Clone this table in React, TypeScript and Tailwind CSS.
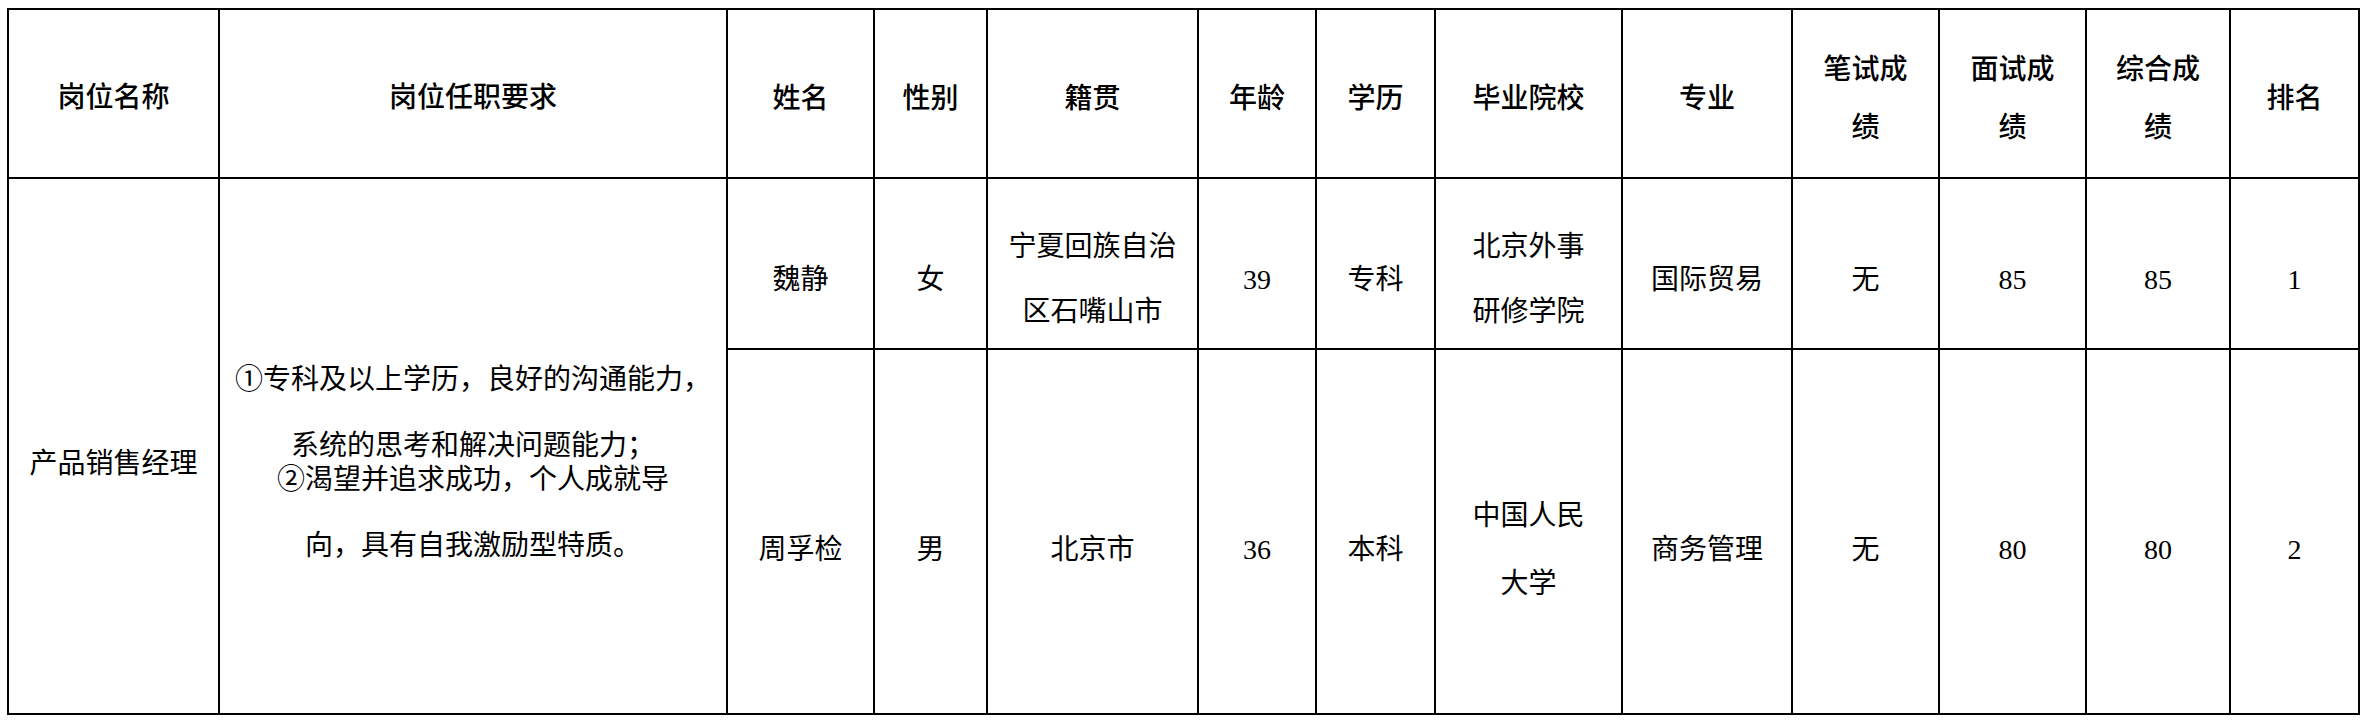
import React from "react";

const cell = "bg-white flex flex-col items-center justify-center text-center text-black";

function Lines({ lines, lead }: { lines: string[]; lead: string }) {
  return (
    <div className={lead}>
      {lines.map((l, i) => (
        <div key={i} className="whitespace-nowrap">
          {l}
        </div>
      ))}
    </div>
  );
}

export default function App() {
  const headers: { t: string[] }[] = [
    { t: ["姓名"] },
    { t: ["性别"] },
    { t: ["籍贯"] },
    { t: ["年龄"] },
    { t: ["学历"] },
    { t: ["毕业院校"] },
    { t: ["专业"] },
    { t: ["笔试成", "绩"] },
    { t: ["面试成", "绩"] },
    { t: ["综合成", "绩"] },
    { t: ["排名"] },
  ];
  const row1 = [
    ["魏静"],
    ["女"],
    ["宁夏回族自治", "区石嘴山市"],
    ["39"],
    ["专科"],
    ["北京外事", "研修学院"],
    ["国际贸易"],
    ["无"],
    ["85"],
    ["85"],
    ["1"],
  ];
  const row2 = [
    ["周孚检"],
    ["男"],
    ["北京市"],
    ["36"],
    ["本科"],
    ["中国人民", "大学"],
    ["商务管理"],
    ["无"],
    ["80"],
    ["80"],
    ["2"],
  ];
  return (
    <div className="w-[2366px] h-[721px] bg-white pt-[8px] pl-[7px] font-['Liberation_Serif','Noto_Sans_CJK_SC',serif] text-[28px]">
      <div className="grid w-fit bg-black p-[2px] gap-[2px] grid-cols-[209px_506px_145px_111px_209px_116px_117px_185px_168px_145px_145px_142px_127px] grid-rows-[167px_169px_363px]">
        <div className={`${cell} pt-[9px] font-medium`}>岗位名称</div>
        <div className={`${cell} pt-[9px] font-medium`}>岗位任职要求</div>
        {headers.map((h, i) => (
          <div key={i} className={`${cell} pt-[10px] font-medium`}>
            <Lines lines={h.t} lead="leading-[58px]" />
          </div>
        ))}
        <div className={`${cell} row-span-2 pt-[36px]`}>产品销售经理</div>
        <div className={`${cell} row-span-2 pt-[34px]`}>
          <div className="leading-[66px] whitespace-nowrap">①专科及以上学历，良好的沟通能力，</div>
          <div className="leading-[66px] whitespace-nowrap">系统的思考和解决问题能力；</div>
          <div className="leading-[66px] whitespace-nowrap -mt-[32px]">②渴望并追求成功，个人成就导</div>
          <div className="leading-[66px] whitespace-nowrap">向，具有自我激励型特质。</div>
        </div>
        {row1.map((c, i) => (
          <div key={"a" + i} className={`${cell} pt-[31px]`}>
            <Lines lines={c} lead="leading-[65px]" />
          </div>
        ))}
        {row2.map((c, i) => (
          <div key={"b" + i} className={`${cell} pt-[37px]`}>
            <Lines lines={c} lead="leading-[68px]" />
          </div>
        ))}
      </div>
    </div>
  );
}
